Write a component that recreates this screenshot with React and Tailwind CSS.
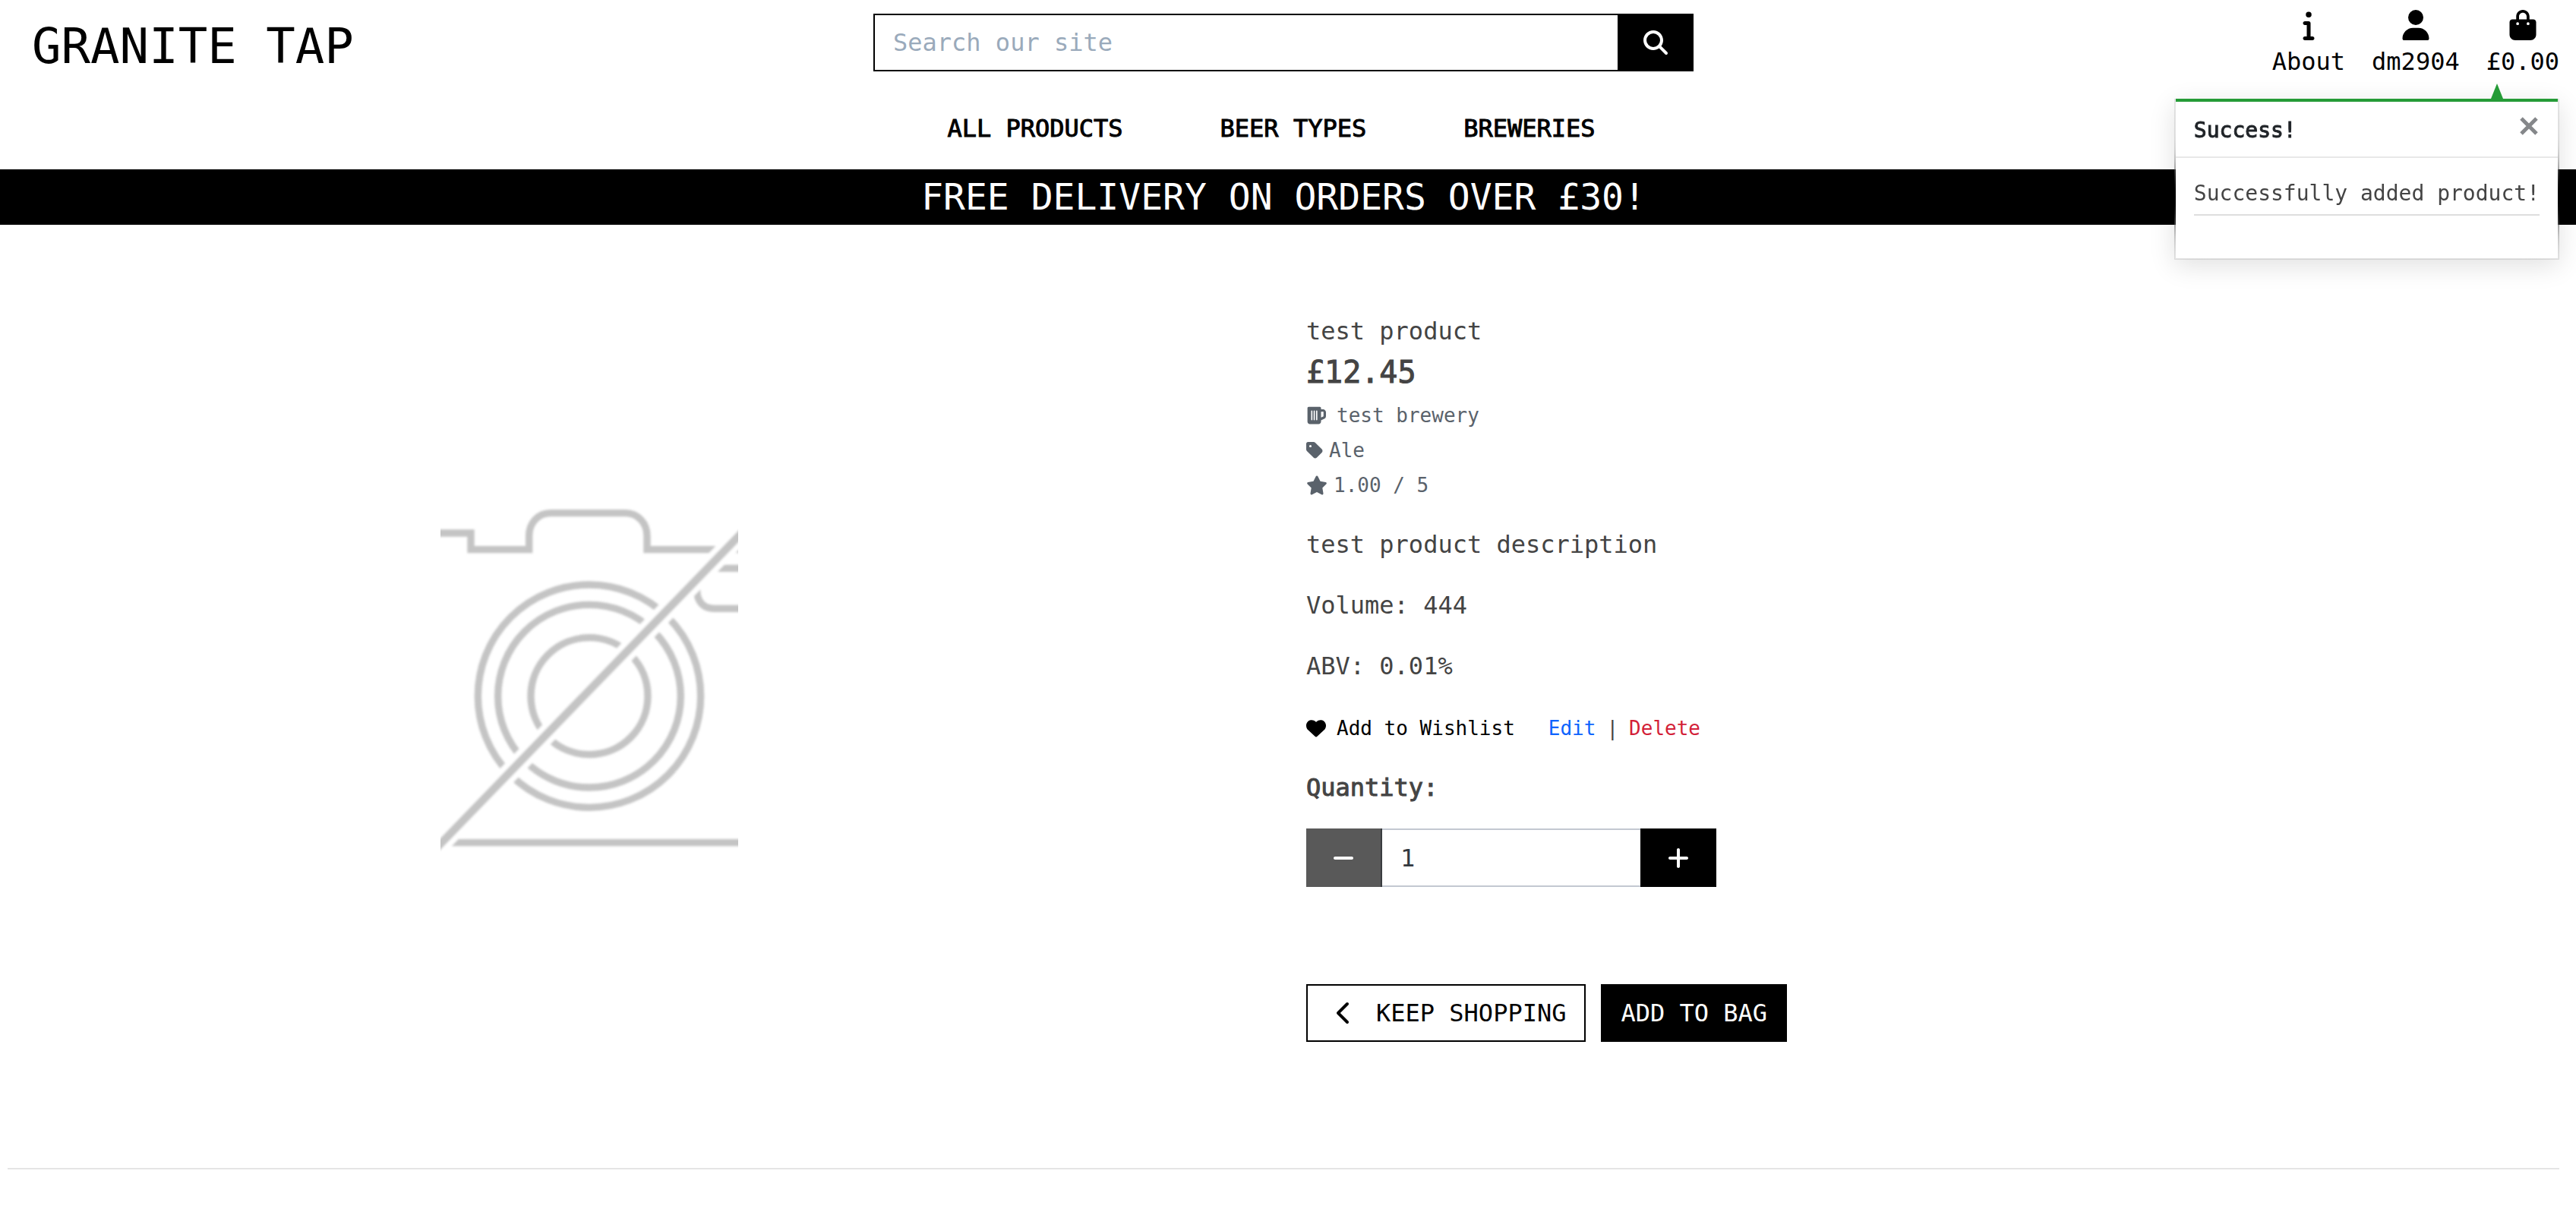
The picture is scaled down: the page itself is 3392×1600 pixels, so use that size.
import React, { useState } from "react";
import {
  FaBagShopping,
  FaBeerMugEmpty,
  FaChevronLeft,
  FaHeart,
  FaInfo,
  FaMagnifyingGlass,
  FaMinus,
  FaPlus,
  FaStar,
  FaTag,
  FaUser,
} from "react-icons/fa6";

const accountLinks = [
  { label: "About", Icon: FaInfo },
  { label: "dm2904", Icon: FaUser },
  { label: "£0.00", Icon: FaBagShopping },
];

const navLinks = ["ALL PRODUCTS", "BEER TYPES", "BREWERIES"];

function Toast({ onClose }) {
  return (
    <div
      role="status"
      className="absolute top-[130px] right-[22px] border-2 border-t-0 border-black/10 bg-white bg-clip-padding shadow-[0_8px_32px_rgba(0,0,0,0.12)] backdrop-blur-[20px]"
    >
      <svg
        viewBox="0 0 16 20"
        className="absolute -top-5 right-[72px] h-5 w-4 fill-[#259b37]"
        aria-hidden="true"
      >
        <path d="M8 0 16 20H0Z" />
      </svg>
      <div className="flex items-center justify-between border-t-4 border-b-2 border-t-[#259b37] border-b-[#e8e8e8] pt-[18px] pr-[26px] pb-[14px] pl-6">
        <strong className="text-[28px] leading-10 font-normal text-[#212529] [-webkit-text-stroke:1px]">
          Success!
        </strong>
        <button type="button" aria-label="Close" onClick={onClose} className="pb-3">
          <svg viewBox="0 0 24 24" className="h-6 w-6 stroke-[#85878a]" strokeWidth="5">
            <path d="M2 2 22 22M22 2 2 22" />
          </svg>
        </button>
      </div>
      <div className="px-6 pt-[27px] pb-14">
        <p className="border-b-2 border-[#dedede] pb-[7px] text-[28px] leading-10 whitespace-nowrap text-[#444]">
          Successfully added product!
        </p>
      </div>
    </div>
  );
}

function Header() {
  return (
    <header className="text-black">
      <div className="grid h-[145px] grid-cols-3 items-start pr-[22px] pl-[10px]">
        <a href="#home" className="pt-[13px] pl-8 text-[64px] leading-[96px]">
          GRANITE TAP
        </a>
        <form className="flex px-5 pt-[18px]" onSubmit={(e) => e.preventDefault()}>
          <input
            type="search"
            aria-label="Search our site"
            placeholder="Search our site"
            className="h-[76px] min-w-0 flex-1 border-2 border-r-0 border-black px-6 outline-none placeholder:text-[#9aaabb]"
          />
          <button
            type="submit"
            aria-label="Search"
            className="flex w-[100px] items-center justify-center bg-black text-white"
          >
            <FaMagnifyingGlass className="h-8 w-8" />
          </button>
        </form>
        <div className="flex justify-end gap-[35px] pt-[13px]">
          {accountLinks.map(({ label, Icon }) => (
            <a key={label} href="#account" className="flex flex-col items-center gap-1">
              <Icon className="h-10 w-10" />
              {label}
            </a>
          ))}
        </div>
      </div>
      <nav className="flex h-[78px] justify-center gap-32 pr-11 [-webkit-text-stroke:1px]">
        {navLinks.map((label) => (
          <a key={label} href="#nav">
            {label}
          </a>
        ))}
      </nav>
      <h4 className="bg-black pr-3 text-center text-[48px] leading-[73px] text-white">
        FREE DELIVERY ON ORDERS OVER £30!
      </h4>
    </header>
  );
}

function NoImage() {
  return (
    <svg
      viewBox="60 39 1176 1380"
      className="h-[460px] w-[392px]"
      role="img"
      aria-label="No image available"
      fill="none"
      stroke="#c4c4c4"
      strokeWidth="28"
    >
      <defs>
        <filter id="soft" x="-10%" y="-10%" width="120%" height="120%">
          <feGaussianBlur stdDeviation="4" />
        </filter>
      </defs>
      <g filter="url(#soft)">
        <path d="M0 159H180V224H410V170C410 120 445 80 495 80H790C840 80 876 120 876 170V224H1300" />
        <path d="M1300 298H1100M1300 457H1140C1100 457 1073 430 1073 385V340" />
        <circle cx="648" cy="803" r="440" />
        <circle cx="648" cy="803" r="361" />
        <circle cx="648" cy="803" r="231" />
        <path d="M0 1382H1300" />
        <path d="M20 1428 1280 128" stroke="#fff" strokeWidth="76" />
        <path d="M20 1428 1280 128" strokeWidth="32" />
      </g>
    </svg>
  );
}

function ProductDetails() {
  const [quantity, setQuantity] = useState(1);
  return (
    <div className="pl-[30px] text-[#444]">
      <p>test product</p>
      <p className="text-[40px] leading-[60px] [-webkit-text-stroke:1px]">£12.45</p>
      <ul className="mt-1 text-[26px] leading-[46px] text-[#5a626b]">
        <li className="flex items-center gap-[14px]">
          <FaBeerMugEmpty className="h-[26px] w-[26px]" />
          test brewery
        </li>
        <li className="flex items-center gap-2">
          <FaTag className="h-[26px] w-[22px]" />
          Ale
        </li>
        <li className="flex items-center gap-2">
          <FaStar className="h-[26px] w-[28px]" />
          1.00 / 5
        </li>
      </ul>
      <div className="mt-[31px] flex flex-col gap-8">
        <p>test product description</p>
        <p>Volume: 444</p>
        <p>ABV: 0.01%</p>
      </div>
      <div className="mt-[38px] flex items-center text-[26px] leading-10">
        <a href="#wishlist" className="flex items-center gap-[14px] text-black">
          <FaHeart className="h-[26px] w-[26px]" />
          Add to Wishlist
        </a>
        <a href="#edit" className="ml-11 text-[#0d63fd]">
          Edit
        </a>
        <span className="mx-[14px]">|</span>
        <a href="#delete" className="text-[#d31f38]">
          Delete
        </a>
      </div>
      <label htmlFor="quantity" className="mt-[34px] block [-webkit-text-stroke:1px]">
        Quantity:
      </label>
      <div className="mt-[30px] flex h-[77px] w-[540px]">
        <button
          type="button"
          aria-label="Decrease quantity"
          disabled={quantity <= 1}
          onClick={() => setQuantity(quantity - 1)}
          className="flex w-[100px] items-center justify-center border-r-2 border-[#3a3d40] bg-black text-white disabled:bg-[#595959]"
        >
          <FaMinus className="h-8 w-[28px]" />
        </button>
        <input
          id="quantity"
          type="text"
          inputMode="numeric"
          value={quantity}
          onChange={(e) => setQuantity(Number(e.target.value) || 1)}
          className="min-w-0 flex-1 border-y-2 border-[#c3c8d1] px-6 text-[#343a40] outline-none"
        />
        <button
          type="button"
          aria-label="Increase quantity"
          onClick={() => setQuantity(quantity + 1)}
          className="flex w-[100px] items-center justify-center bg-black text-white"
        >
          <FaPlus className="h-8 w-[28px]" />
        </button>
      </div>
      <div className="mt-32 flex gap-5">
        <a
          href="#products"
          className="flex h-[76px] items-center gap-8 border-2 border-black pr-6 pl-[38px] text-black"
        >
          <FaChevronLeft className="h-8 w-5" />
          KEEP SHOPPING
        </a>
        <button type="submit" className="h-[76px] bg-black px-[26px] text-white">
          ADD TO BAG
        </button>
      </div>
    </div>
  );
}

export default function App() {
  const [toastOpen, setToastOpen] = useState(true);
  return (
    <div className="relative min-h-screen bg-white font-['DejaVu_Sans_Mono',monospace] text-[32px] leading-[48px]">
      <Header />
      {toastOpen && <Toast onClose={() => setToastOpen(false)} />}
      <main className="pt-[116px] pr-[22px] pl-[10px]">
        <div className="grid grid-cols-2 items-center">
          <div className="flex justify-center pr-[148px]">
            <NoImage />
          </div>
          <ProductDetails />
        </div>
        <hr className="mt-[166px] border-t-2 border-[#e5e5e5]" />
      </main>
    </div>
  );
}
